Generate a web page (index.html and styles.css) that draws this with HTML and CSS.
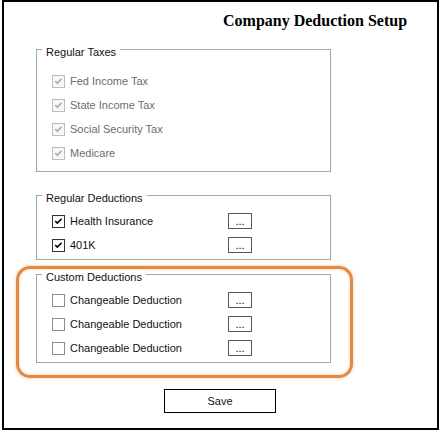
FILE: index.html
```html
<!DOCTYPE html>
<html lang="en">
<head>
<meta charset="utf-8">
<title>Company Deduction Setup</title>
<link rel="stylesheet" href="styles.css">
</head>
<body>
<div class="window">
  <h1 class="title">Company Deduction Setup</h1>

  <section class="group group--taxes">
    <div class="caption">Regular Taxes</div>
    <div class="rows">
      <div class="row"><span class="cb cb--disabled"><svg viewBox="0 0 11 11"><polyline points="2.2,5 4.3,7.1 8.6,2.8"/></svg></span><span class="label label--disabled">Fed Income Tax</span></div>
      <div class="row"><span class="cb cb--disabled"><svg viewBox="0 0 11 11"><polyline points="2.2,5 4.3,7.1 8.6,2.8"/></svg></span><span class="label label--disabled">State Income Tax</span></div>
      <div class="row"><span class="cb cb--disabled"><svg viewBox="0 0 11 11"><polyline points="2.2,5 4.3,7.1 8.6,2.8"/></svg></span><span class="label label--disabled">Social Security Tax</span></div>
      <div class="row"><span class="cb cb--disabled"><svg viewBox="0 0 11 11"><polyline points="2.2,5 4.3,7.1 8.6,2.8"/></svg></span><span class="label label--disabled">Medicare</span></div>
    </div>
  </section>

  <section class="group group--regular">
    <div class="caption">Regular Deductions</div>
    <div class="rows">
      <div class="row"><span class="cb cb--checked"><svg viewBox="0 0 11 11"><polyline points="2.2,5 4.3,7.1 8.6,2.8"/></svg></span><span class="label">Health Insurance</span><button class="more">...</button></div>
      <div class="row"><span class="cb cb--checked"><svg viewBox="0 0 11 11"><polyline points="2.2,5 4.3,7.1 8.6,2.8"/></svg></span><span class="label">401K</span><button class="more">...</button></div>
    </div>
  </section>

  <div class="highlight">
    <section class="group group--custom">
      <div class="caption">Custom Deductions</div>
      <div class="rows">
        <div class="row"><span class="cb"></span><span class="label">Changeable Deduction</span><button class="more">...</button></div>
        <div class="row"><span class="cb"></span><span class="label">Changeable Deduction</span><button class="more">...</button></div>
        <div class="row"><span class="cb"></span><span class="label">Changeable Deduction</span><button class="more">...</button></div>
      </div>
    </section>
  </div>

  <button class="save">Save</button>
</div>
</body>
</html>
```

FILE: styles.css
```css
html, body {
  margin: 0;
  padding: 0;
  background: #fff;
}

body {
  font-family: "Liberation Sans", Arial, sans-serif;
  font-size: 11px;
  color: #000;
}

.window {
  box-sizing: border-box;
  width: 437px;
  height: 430px;
  margin-left: 2px;
  border: 2px solid #000;
  display: flow-root;
}

.title {
  margin: 9px 0 0 219px;
  font-family: "Liberation Serif", "Times New Roman", serif;
  font-size: 16px;
  font-weight: bold;
  line-height: 19px;
  color: #000;
}

.group {
  box-sizing: border-box;
  width: 295px;
  margin-left: 32px;
  border: 1px solid #a6a6a6;
  padding-bottom: 2px;
}

.group--taxes {
  margin-top: 19px;
  padding-bottom: 6px;
}

.group--regular {
  margin-top: 23px;
}

.caption {
  width: fit-content;
  margin: -4px 0 0 5px;
  padding: 0 4px;
  line-height: 13px;
  background: #fff;
  color: #111;
}

.rows {
  margin-top: 4px;
}

.group--taxes .rows {
  margin-top: 10px;
}

.row {
  display: grid;
  grid-template-columns: 13px 153px 24px;
  column-gap: 5px;
  align-items: center;
  height: 24px;
  padding-left: 15px;
}

.cb {
  box-sizing: border-box;
  width: 13px;
  height: 13px;
  border: 1px solid #8f8f8f;
  background: #fff;
  display: block;
}

.cb svg {
  display: block;
  width: 11px;
  height: 11px;
  fill: none;
  stroke-width: 1.6;
  stroke-linecap: butt;
  stroke-linejoin: miter;
}

.cb--checked {
  border-color: #333;
}

.cb--checked svg {
  stroke: #000;
}

.cb--disabled {
  border-color: #bcbcbc;
  background: #f7f7f7;
}

.cb--disabled svg {
  stroke: #a8a8a8;
}

.label {
  line-height: 13px;
  white-space: nowrap;
  color: #111;
}

.label--disabled {
  color: #6d6d6d;
}

.more {
  box-sizing: border-box;
  width: 24px;
  height: 16px;
  margin: 0;
  padding: 0;
  border: 1px solid #555;
  background: #fff;
  font-family: "Liberation Sans", Arial, sans-serif;
  font-size: 11px;
  line-height: 14px;
  color: #000;
  text-align: center;
}

.highlight {
  box-sizing: border-box;
  width: 337px;
  margin: 6px 0 0 12px;
  padding: 5px 19px 12px 17px;
  border: 3px solid #e08a48;
  border-radius: 14px;
  box-shadow: 0 0 3px 1px rgba(250, 195, 140, 0.55), inset 0 0 2px 1px rgba(250, 195, 140, 0.45);
}

.group--custom {
  margin-left: 0;
}

.save {
  display: block;
  box-sizing: border-box;
  width: 112px;
  height: 24px;
  margin: 11px 0 0 160px;
  padding: 0;
  border: 1px solid #000;
  background: #fff;
  font-family: "Liberation Sans", Arial, sans-serif;
  font-size: 11px;
  font-weight: normal;
  color: #111;
}
```
